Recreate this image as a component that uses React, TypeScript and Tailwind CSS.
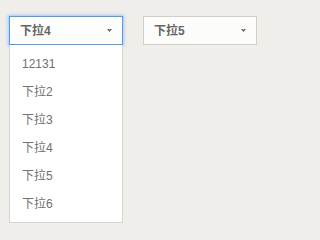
import React from "react";

function Arrow() {
  return (
    <svg width="5" height="3" viewBox="0 0 5 3" className="block">
      <polygon points="0,0 2,0 2.5,1 3,0 5,0 2.5,3" fill="#7a5a3e" />
    </svg>
  );
}

const items = ["12131", "下拉2", "下拉3", "下拉4", "下拉5", "下拉6"];

export default function App() {
  return (
    <div
      className="w-full min-h-screen bg-[#efeeea] pl-[9px] pt-[16px] flex items-start gap-[20px] overflow-hidden"
      style={{ fontFamily: '"Liberation Sans", "Noto Sans CJK SC", sans-serif' }}
    >
      <div className="relative w-[114px] shrink-0">
        <div className="h-[29px] border border-[#4b9bf7] bg-[#fdfdfb] shadow-[0_0_3px_1px_rgba(80,150,250,0.45)] flex items-center justify-between pl-[10px] pr-[10px]">
          <span className="text-[12px] font-bold text-[#666666] leading-none">下拉4</span>
          <Arrow />
        </div>
        <div className="absolute left-0 top-full w-[114px] bg-white border border-t-0 border-[#d6d2cc] pt-[5px] pb-[4px]">
          {items.map((t) => (
            <div key={t} className="h-[28px] flex items-center pl-[12px] text-[12px] text-[#707070] leading-none">
              {t}
            </div>
          ))}
        </div>
      </div>
      <div className="w-[114px] shrink-0">
        <div className="h-[29px] border border-[#d3cfc8] bg-[#fcfcfa] flex items-center justify-between pl-[10px] pr-[10px]">
          <span className="text-[12px] font-bold text-[#666666] leading-none">下拉5</span>
          <Arrow />
        </div>
      </div>
    </div>
  );
}
